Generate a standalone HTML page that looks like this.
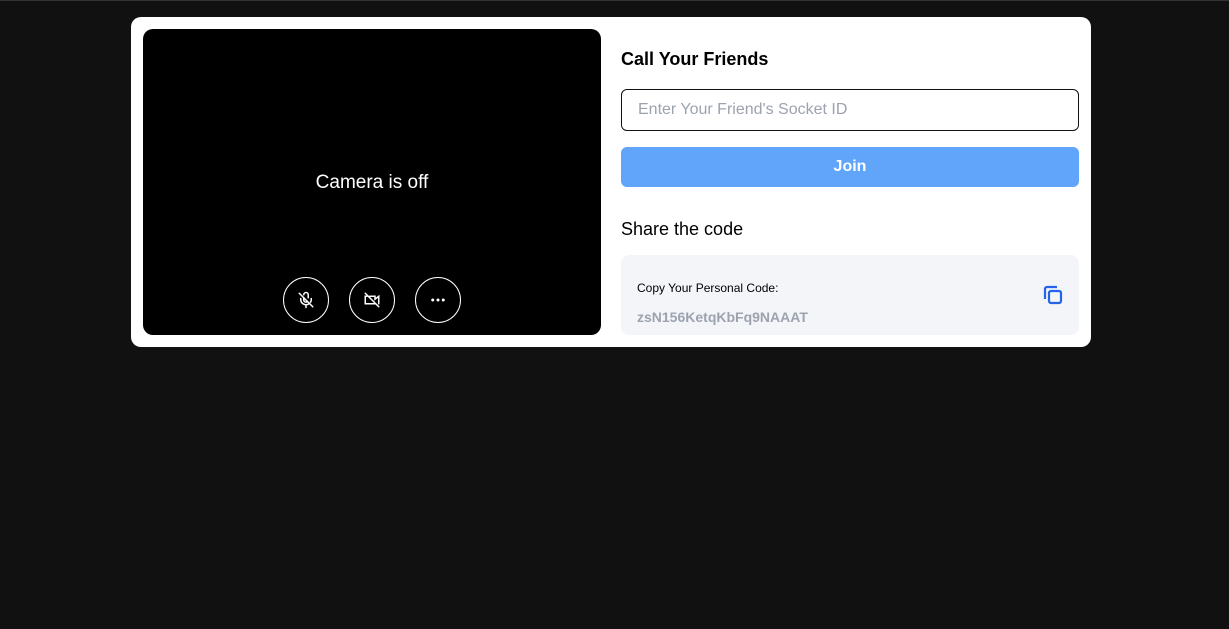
<!DOCTYPE html>
<html><head><style>
body{margin:0;background:#111;width:1229px;height:629px;overflow:hidden;font-family:"Liberation Sans",sans-serif;border-top:1px solid #333;box-sizing:border-box;position:relative}
.card{position:absolute;left:131px;top:16px;width:960px;height:330px;background:#fff;border-radius:10px}
.vid{position:absolute;left:12px;top:12px;width:458px;height:306px;background:#000;border-radius:10px}
.off{position:absolute;top:143px;width:100%;text-align:center;color:#fff;font-size:19px}
.btn{position:absolute;top:248px;width:44px;height:44px;border:1px solid #fff;border-radius:50%;display:flex;align-items:center;justify-content:center}
h2{position:absolute;left:490px;top:32px;margin:0;font-size:18px;font-weight:bold;color:#000}
.inp{position:absolute;left:490px;top:72px;color:#9ca3af;font-size:16px;line-height:40px;padding-left:16px;box-sizing:border-box;width:458px;height:42px;border:1px solid #111;border-radius:6px}
.join{position:absolute;left:490px;top:130px;width:458px;height:40px;background:#60a5fa;border-radius:6px;color:#fff;font-weight:bold;font-size:16px;text-align:center;line-height:40px}
.share{position:absolute;left:490px;top:202px;font-size:18px;color:#000}
.code{position:absolute;left:490px;top:238px;width:458px;height:80px;background:#f4f5f9;border-radius:8px}
</style></head><body>
<div class="card">
 <div class="vid">
  <div class="off">Camera is off</div>
  <div class="btn" style="left:140px"><svg width="18" height="18" viewBox="0 0 24 24" fill="none" stroke="#fff" stroke-width="2" stroke-linecap="round"><path d="M9 9v3a3 3 0 0 0 5 2M15 9V5a3 3 0 0 0-6 0"/><path d="M19 10v2a7 7 0 0 1-1 3M5 10v2a7 7 0 0 0 11 5M12 19v3M3 3l18 18"/></svg></div>
  <div class="btn" style="left:206px"><svg width="18" height="18" viewBox="0 0 24 24" fill="none" stroke="#fff" stroke-width="2" stroke-linecap="round"><path d="M3 3l18 18M16 16v1H3V7h2M9 7h7v4l5-4v10"/></svg></div>
  <div class="btn" style="left:272px"><svg width="18" height="18" viewBox="0 0 24 24" fill="#fff"><circle cx="5" cy="12" r="2"/><circle cx="12" cy="12" r="2"/><circle cx="19" cy="12" r="2"/></svg></div>
 </div>
 <h2>Call Your Friends</h2>
 <div class="inp">Enter Your Friend's Socket ID</div>
 <div class="join">Join</div>
 <div class="share">Share the code</div>
 <div class="code">
  <div style="position:absolute;left:16px;top:26px;font-size:12px;color:#000">Copy Your Personal Code:</div>
  <div style="position:absolute;left:16px;top:54px;font-size:14px;font-weight:bold;color:#9ca3af">zsN156KetqKbFq9NAAAT</div>
  <svg style="position:absolute;left:421px;top:29px" width="22" height="22" viewBox="0 0 22 22" fill="none" stroke="#2563eb" stroke-width="2.2"><rect x="7" y="7" width="12" height="12" rx="2"/><path d="M3 15V5a2 2 0 0 1 2-2h10"/></svg>
 </div>
</div>
</body></html>
